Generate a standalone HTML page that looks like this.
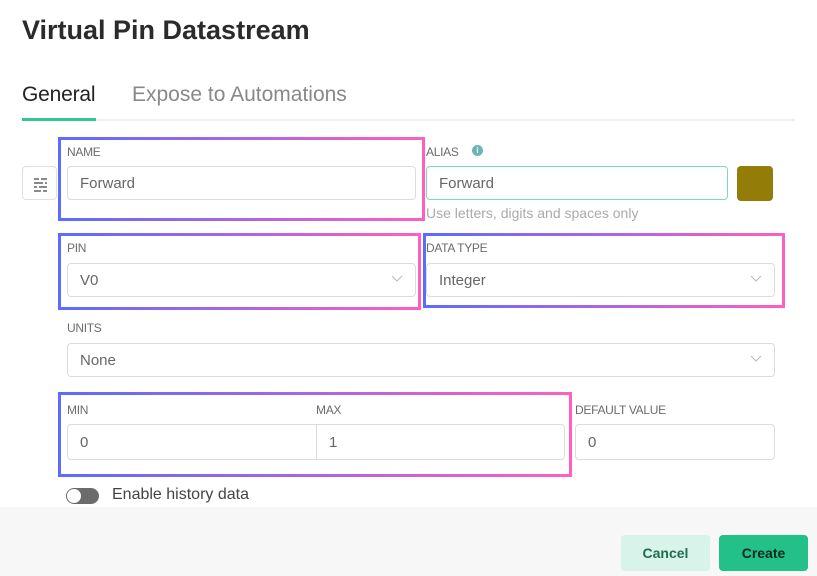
<!DOCTYPE html>
<html><head><style>
*{box-sizing:border-box;margin:0;padding:0}
body{width:817px;height:576px;background:#fff;font-family:"Liberation Sans",sans-serif;position:relative;overflow:hidden;color:#333}
.a{position:absolute}
.lbl{position:absolute;font-size:12px;color:#6b6b6b;letter-spacing:-0.3px}
.inp{position:absolute;border:1px solid #dcdcdc;border-radius:4px;background:#fff;font-size:15px;color:#666;padding-left:12px;display:flex;align-items:center}
.gb{position:absolute;padding:3px;background:linear-gradient(90deg,#5a6cff,#ff5fc1)}
.gb>div{background:#fff;width:100%;height:100%}
.chev{position:absolute;right:12px;top:11px;width:12px;height:8px}
</style></head><body>
<div class="a" style="left:22px;top:15px;font-size:27px;font-weight:bold;color:#2b2b2b;letter-spacing:0">Virtual Pin Datastream</div>
<div class="a" style="left:22px;top:83px;font-size:21px;color:#222;letter-spacing:-0.2px">General</div>
<div class="a" style="left:132px;top:83px;font-size:21px;color:#888;letter-spacing:0">Expose to Automations</div>
<div class="a" style="left:22px;top:119px;width:773px;height:2px;background:#f0f0f0"></div>
<div class="a" style="left:22px;top:118px;width:74px;height:3px;background:#2fc894"></div>

<div class="a" style="left:22px;top:166px;width:35px;height:34px;border:1px solid #e0e0e0;border-radius:4px"><svg width="35" height="34" viewBox="0 0 35 34"><g stroke="#444" stroke-width="1.3" fill="none"><path d="M11 12h13M11 16h13M11 20h13M11 24h13"/><path d="M17 10v4M21 14v4M15 18v4M19 22v4" stroke="#fff" stroke-width="2"/></g></svg></div>

<div class="gb" style="left:58px;top:137px;width:367px;height:84px"><div></div></div>
<div class="lbl" style="left:67px;top:145px">NAME</div>
<div class="inp" style="left:67px;top:166px;width:349px;height:34px">Forward</div>

<div class="lbl" style="left:426px;top:145px">ALIAS</div>
<div class="a" style="left:472px;top:145px;width:11px;height:11px;border-radius:50%;background:#6bb5b5;color:#fff;font-size:8px;text-align:center;line-height:11px;font-weight:bold">i</div>
<div class="inp" style="left:426px;top:166px;width:302px;height:34px;border-color:#7ed9b8">Forward</div>
<div class="a" style="left:737px;top:166px;width:36px;height:35px;border-radius:4px;background:#947c08"></div>
<div class="a" style="left:426px;top:205px;font-size:14px;color:#aaa">Use letters, digits and spaces only</div>

<div class="gb" style="left:58px;top:233px;width:363px;height:77px"><div></div></div>
<div class="lbl" style="left:67px;top:241px">PIN</div>
<div class="inp" style="left:67px;top:263px;width:349px;height:34px">V0<svg class="chev" viewBox="0 0 12 8"><path d="M1 1l5 5 5-5" stroke="#bbb" fill="none"/></svg></div>

<div class="gb" style="left:423px;top:233px;width:362px;height:75px"><div></div></div>
<div class="lbl" style="left:426px;top:241px">DATA TYPE</div>
<div class="inp" style="left:426px;top:263px;width:349px;height:34px">Integer<svg class="chev" viewBox="0 0 12 8"><path d="M1 1l5 5 5-5" stroke="#bbb" fill="none"/></svg></div>

<div class="lbl" style="left:67px;top:321px">UNITS</div>
<div class="inp" style="left:67px;top:343px;width:708px;height:34px">None<svg class="chev" viewBox="0 0 12 8"><path d="M1 1l5 5 5-5" stroke="#bbb" fill="none"/></svg></div>

<div class="gb" style="left:58px;top:392px;width:514px;height:85px"><div></div></div>
<div class="lbl" style="left:67px;top:403px">MIN</div>
<div class="lbl" style="left:316px;top:403px">MAX</div>
<div class="inp" style="left:67px;top:424px;width:250px;height:36px;border-radius:4px 0 0 4px">0</div>
<div class="inp" style="left:316px;top:424px;width:249px;height:36px;border-radius:0 4px 4px 0">1</div>
<div class="lbl" style="left:575px;top:403px">DEFAULT VALUE</div>
<div class="inp" style="left:575px;top:424px;width:200px;height:36px">0</div>

<div class="a" style="left:66px;top:488px;width:33px;height:16px;border-radius:8px;background:#6b6b6b"></div>
<div class="a" style="left:67px;top:489px;width:14px;height:14px;border-radius:50%;background:#fff"></div>
<div class="a" style="left:112px;top:486px;font-size:16px;color:#444">Enable history data</div>

<div class="a" style="left:0;top:507px;width:817px;height:69px;background:#f7f7f7"></div>
<div class="a" style="left:621px;top:535px;width:89px;height:36px;border-radius:4px;background:#d8f3e9;color:#1f6d50;font-size:14px;font-weight:bold;text-align:center;line-height:36px">Cancel</div>
<div class="a" style="left:719px;top:535px;width:89px;height:36px;border-radius:4px;background:#23c08a;color:#0b2a1f;font-size:14px;font-weight:bold;text-align:center;line-height:36px">Create</div>
</body></html>
